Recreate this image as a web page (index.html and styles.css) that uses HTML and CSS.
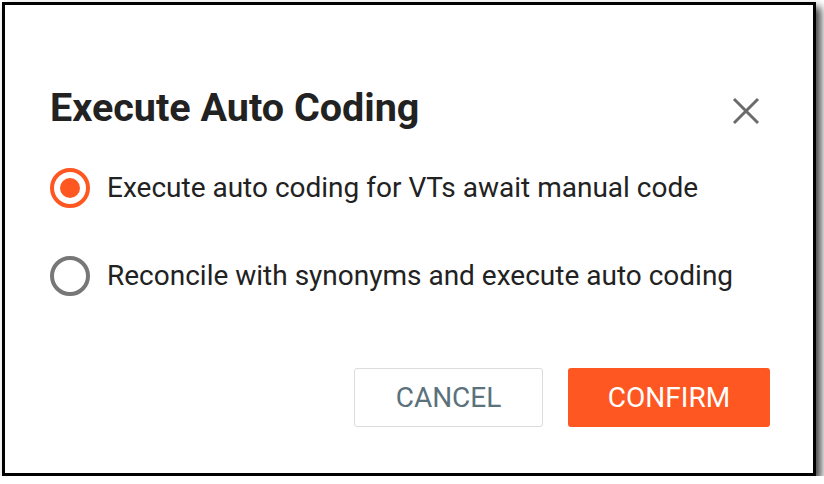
FILE: index.html
```html
<!DOCTYPE html>
<html>
<head>
<meta charset="utf-8">
<link rel="stylesheet" href="styles.css">
</head>
<body>
<div class="frame">
  <div class="dialog">
    <div class="header">
      <h1 class="title">Execute Auto Coding</h1>
      <button class="close" aria-label="Close">
        <svg width="30" height="30" viewBox="0 0 30 30"><path d="M3 3 L27 27 M27 3 L3 27" stroke="#6b6b6b" stroke-width="3" fill="none"/></svg>
      </button>
    </div>
    <div class="options">
      <label class="option">
        <span class="radio checked"><span class="dot"></span></span>
        <span class="label">Execute auto coding for VTs await manual code</span>
      </label>
      <label class="option">
        <span class="radio"></span>
        <span class="label">Reconcile with synonyms and execute auto coding</span>
      </label>
    </div>
    <div class="actions">
      <button class="btn btn-cancel">CANCEL</button>
      <button class="btn btn-confirm">CONFIRM</button>
    </div>
  </div>
</div>
</body>
</html>
```
FILE: styles.css
```css
html, body {
  margin: 0;
  padding: 0;
  background: #fff;
}
body {
  font-family: Roboto, "Liberation Sans", sans-serif;
}
.frame {
  margin: 2px 0 0 2px;
  width: 814px;
  height: 474px;
  box-sizing: border-box;
  border: 3px solid #000;
  box-shadow: 5px 5px 8px rgba(0,0,0,0.75);
  background: #fff;
}
.dialog {
  padding: 80px 43px 0 45px;
  display: flex;
  flex-direction: column;
}
.header {
  display: flex;
  align-items: center;
  justify-content: space-between;
}
.title {
  margin: 0;
  font-size: 39.5px;
  line-height: 46px;
  font-weight: 700;
  color: #222;
}
.close {
  border: 0;
  background: none;
  padding: 0;
  width: 30px;
  height: 30px;
  margin-right: 9px;
  margin-top: 6px;
}
.close svg { display: block; }
.options {
  margin-top: 37px;
  display: flex;
  flex-direction: column;
  gap: 48px;
}
.option {
  display: flex;
  align-items: center;
  gap: 17px;
}
.radio {
  width: 40px;
  height: 40px;
  box-sizing: border-box;
  border: 4px solid #777;
  border-radius: 50%;
  display: flex;
  align-items: center;
  justify-content: center;
  flex: none;
}
.radio.checked { border-color: #ff5722; }
.dot {
  width: 20px;
  height: 20px;
  border-radius: 50%;
  background: #ff5722;
}
.label {
  font-size: 28px;
  line-height: 40px;
  color: #222;
}
.actions {
  margin-top: 72px;
  display: flex;
  justify-content: flex-end;
  gap: 25px;
}
.btn {
  font-family: Roboto, "Liberation Sans", sans-serif;
  font-size: 28px;
  height: 59px;
  border-radius: 3px;
  box-sizing: border-box;
  padding: 0;
}
.btn-cancel {
  width: 189px;
  background: #fff;
  border: 1px solid #dcdcdc;
  color: #5b717c;
}
.btn-confirm {
  width: 202px;
  background: #ff5722;
  border: 0;
  color: #fff;
}
```
